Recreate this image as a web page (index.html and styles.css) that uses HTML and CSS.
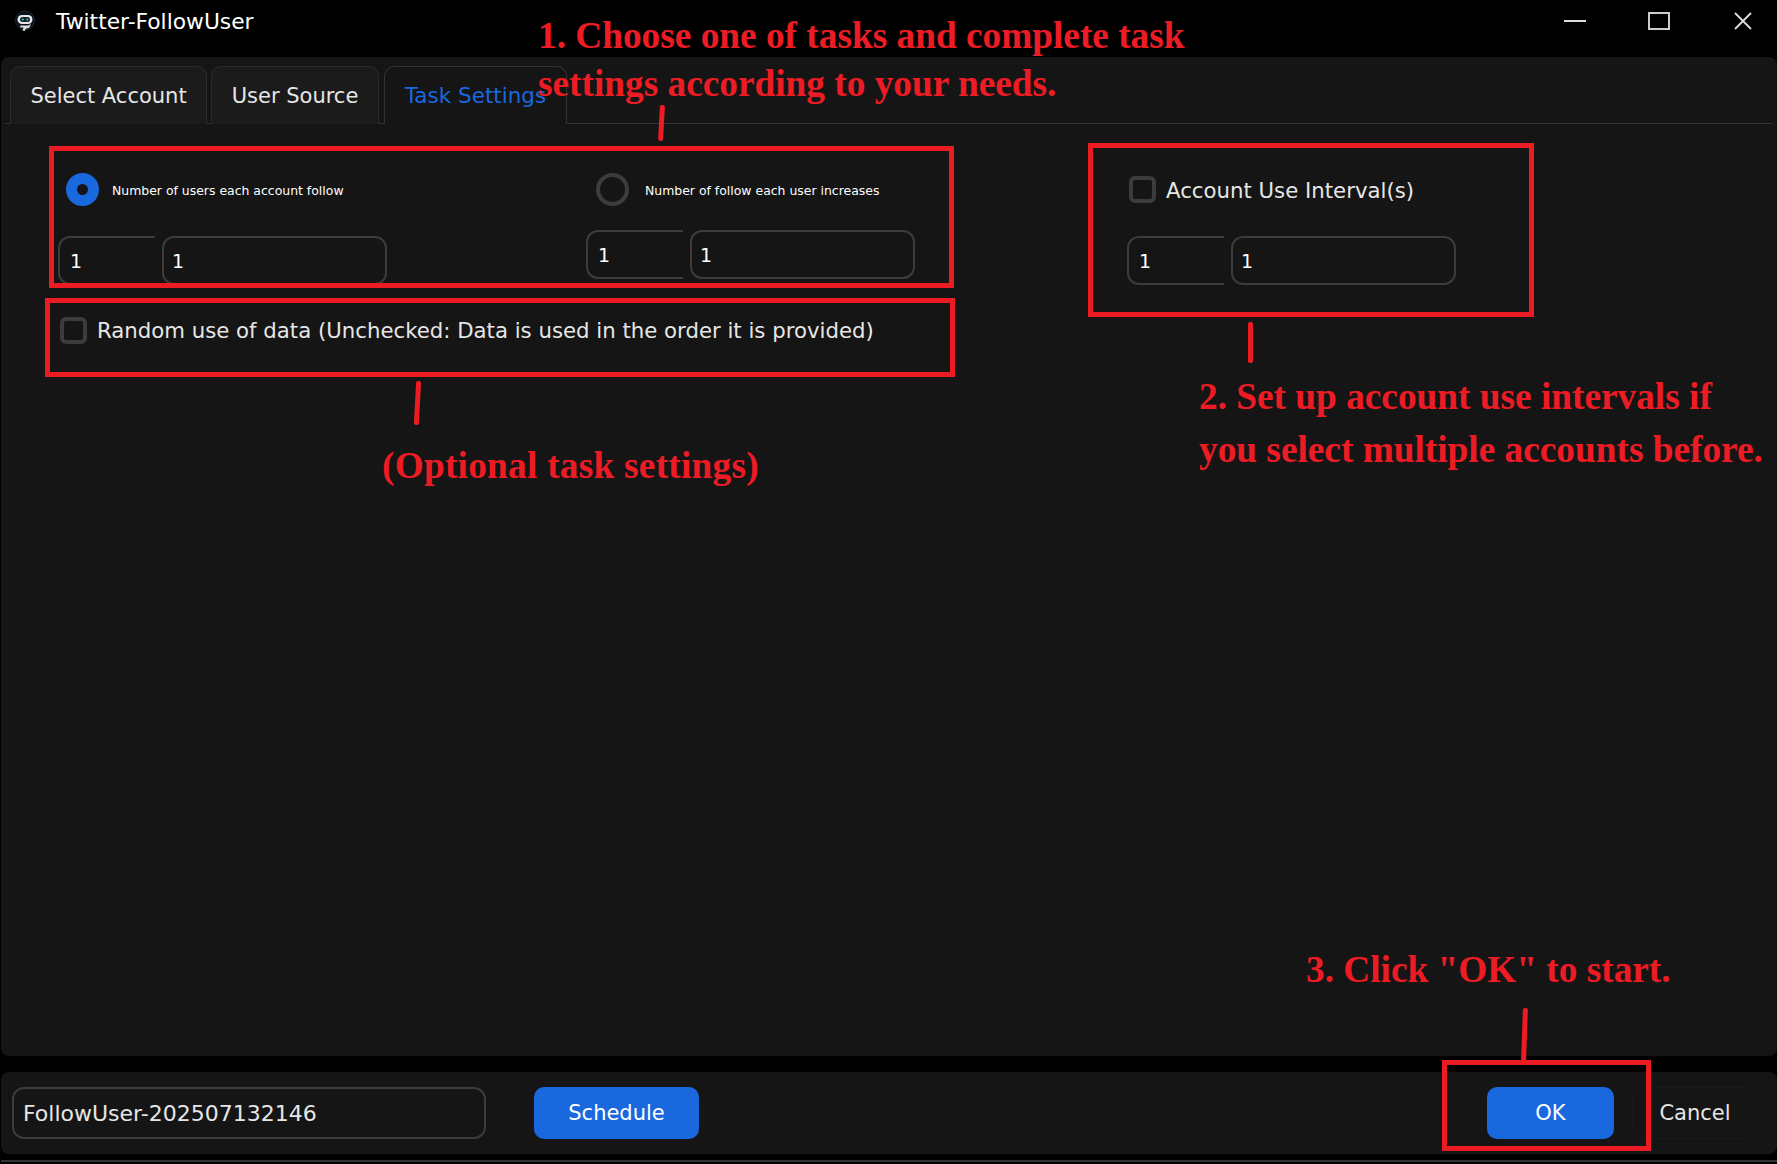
FILE: index.html
```html
<!DOCTYPE html>
<html lang="en">
<head>
    <meta charset="UTF-8">
    <title>Twitter-FollowUser</title>
    <link rel="stylesheet" href="styles.css">
</head>
<body>
    <div class="app">
        <div class="titlebar">
            <svg class="app-icon" viewBox="0 0 20 24" width="20" height="24">
                <circle cx="10" cy="11.500" r="9.500" fill="#0a1118" stroke="#1c2a36"/>
                <rect x="2.500" y="6" width="15" height="9" rx="4.500" fill="#e6e6e6"/>
                <rect x="5" y="8" width="10" height="5" rx="2.500" fill="#17202a"/>
                <circle cx="7.800" cy="10.400" r="1" fill="#2ad4c8"/>
                <circle cx="12.200" cy="10.400" r="1" fill="#2ad4c8"/>
                <path d="M5 16.500h8l3-1.500-2 4-3 .5-1.500 2.500-2-.5 1-3H5.500z" fill="#dcdcdc"/>
            </svg>
            <span class="app-title">Twitter-FollowUser</span>
            <div class="window-buttons">
                <svg class="win-min" width="22" height="18" viewBox="0 0 22 18"><path d="M0 9h22" stroke="#ddd" stroke-width="2"/></svg>
                <svg class="win-max" width="22" height="18" viewBox="0 0 22 18"><rect x="1" y="1" width="20" height="16" fill="none" stroke="#ccc" stroke-width="2"/></svg>
                <svg class="win-close" width="18" height="18" viewBox="0 0 18 18"><path d="M1 1l16 16M17 1L1 17" stroke="#ddd" stroke-width="1.800"/></svg>
            </div>
        </div>

        <div class="main-panel">
            <div class="tabs">
                <div class="tab tab-account">Select Account</div>
                <div class="tab tab-source">User Source</div>
                <div class="tab tab-active">Task Settings</div>
            </div>
            <div class="task-body">
                <div class="task-left">
                    <div class="options">
                        <div class="option option-first">
                            <div class="radio-row">
                                <span class="radio radio-on"></span>
                                <span class="radio-label">Number of users each account follow</span>
                            </div>
                            <div class="spin-pair">
                                <div class="spin-start">1</div>
                                <div class="spin-end">1</div>
                            </div>
                        </div>
                        <div class="option option-second">
                            <div class="radio-row">
                                <span class="radio"></span>
                                <span class="radio-label">Number of follow each user increases</span>
                            </div>
                            <div class="spin-pair">
                                <div class="spin-start">1</div>
                                <div class="spin-end">1</div>
                            </div>
                        </div>
                    </div>
                    <div class="check-row check-random">
                        <span class="checkbox"></span>
                        <span>Random use of data (Unchecked: Data is used in the order it is provided)</span>
                    </div>
                </div>
                <div class="task-right">
                    <div class="check-row">
                        <span class="checkbox"></span>
                        <span class="check-label">Account Use Interval(s)</span>
                    </div>
                    <div class="spin-pair">
                        <div class="spin-start">1</div>
                        <div class="spin-end">1</div>
                    </div>
                </div>
            </div>
        </div>

        <div class="footer-panel">
            <div class="name-input">FollowUser-202507132146</div>
            <button class="btn btn-schedule">Schedule</button>
            <button class="btn btn-ok">OK</button>
            <button class="btn btn-cancel">Cancel</button>
        </div>
        <div class="bottom-edge"></div>

        <!-- Red notes drawn over the window -->
        <div class="note-box box-options"></div>
        <div class="note-box box-random"></div>
        <div class="note-box box-interval"></div>
        <div class="note-box box-ok"></div>
        <div class="note-tick tick-options"></div>
        <div class="note-tick tick-random"></div>
        <div class="note-tick tick-interval"></div>
        <div class="note-tick tick-ok"></div>
        <div class="note note-1a">1. Choose one of tasks and complete task</div>
        <div class="note note-1b">settings according to your needs.</div>
        <div class="note note-2a">2. Set up account use intervals if</div>
        <div class="note note-2b">you select multiple accounts before.</div>
        <div class="note note-opt">(Optional task settings)</div>
        <div class="note note-3">3. Click "OK" to start.</div>
    </div>
</body>
</html>
```

FILE: styles.css
```css
body {
    margin: 0;
    background: #000;
    font-family: "DejaVu Sans", sans-serif;
    color: #e6e6e6;
}
.app {
    position: relative;
    width: 1777px;
    height: 1164px;
    overflow: hidden;
    display: flex;
    flex-direction: column;
}
.titlebar {
    height: 57px;
    display: flex;
    align-items: flex-start;
}
.app-icon {
    margin: 9px 0 0 15px;
}
.app-title {
    margin: 9px 0 0 21px;
    font-size: 21.800px;
    line-height: 26px;
    color: #fff;
}
.window-buttons {
    margin-left: auto;
    display: flex;
    padding: 12px 25px 0 0;
}
.win-max {
    margin-left: 62px;
}
.win-close {
    margin-left: 64px;
}
.main-panel {
    height: 999px;
    margin-left: 1px;
    background: #151515;
    border-radius: 8px;
}
.tabs {
    height: 57px;
    margin: 0 5px 0 4px;
    padding: 9px 0 0 5px;
    display: flex;
    gap: 4px;
    border-bottom: 1px solid #333;
}
.tab {
    box-sizing: border-box;
    height: 58px;
    padding-top: 16px;
    text-align: center;
    font-size: 21px;
    line-height: 26px;
    background: #1b1b1b;
    border: 1px solid #2b2b2b;
    border-bottom: none;
    border-radius: 10px 10px 0 0;
}
.tab-account {
    width: 197px;
}
.tab-source {
    width: 168px;
}
.tab-active {
    width: 183px;
    margin-left: 1px;
    font-size: 21.500px;
    color: #1a68de;
    background: #151515;
    border-color: #333;
}
.task-body {
    display: flex;
    padding-top: 48px;
}
.task-left {
    width: 1126px;
}
.options {
    display: flex;
}
.option {
    padding-top: 1px;
}
.option-first {
    width: 528px;
    margin-left: 57px;
}
.option-first .spin-pair {
    margin-top: 30px;
}
.option-second .spin-pair {
    margin-top: 24px;
}
.radio-row {
    display: flex;
    align-items: center;
    height: 33px;
    margin-left: 8px;
    gap: 13px;
    font-size: 12.450px;
    color: #fff;
}
.radio-label {
    padding-top: 2px;
}
.option-second .radio-row {
    margin-left: 10px;
    gap: 16px;
}
.radio {
    box-sizing: border-box;
    width: 33px;
    height: 33px;
    border: 4px solid #3c3c3c;
    border-radius: 50%;
}
.radio-on {
    border: 11px solid #1a68de;
    background: #151515;
}
.spin-pair {
    display: flex;
    gap: 7px;
    height: 49px;
    color: #fff;
    font-size: 19px;
}
.spin-start,
.spin-end {
    box-sizing: border-box;
    display: flex;
    align-items: center;
    padding-left: 10px;
    border: 2px solid #3c3c3c;
    border-radius: 12px;
}
.spin-start {
    width: 97px;
    border-right: none;
    border-radius: 12px 0 0 12px;
}
.spin-end {
    width: 225px;
    padding-left: 8px;
}
.check-row {
    display: flex;
    align-items: center;
    height: 27px;
    gap: 10px;
    font-size: 21.250px;
}
.check-label {
    padding-top: 2px;
}
.check-random {
    margin: 32px 0 0 59px;
}
.checkbox {
    box-sizing: border-box;
    width: 27px;
    height: 27px;
    border: 4px solid #3c3c3c;
    border-radius: 6px;
}
.task-right {
    padding-top: 4px;
}
.task-right .check-row {
    margin: 0 0 33px 2px;
}
.footer-panel {
    box-sizing: border-box;
    height: 82px;
    margin: 16px 0 0 1px;
    padding: 15px 19px 0 11px;
    display: flex;
    background: #151515;
    border-radius: 8px;
}
.name-input {
    box-sizing: border-box;
    width: 474px;
    height: 52px;
    padding-left: 9px;
    font-size: 22px;
    line-height: 50px;
    border: 2px solid #3c3c3c;
    border-radius: 12px;
}
.btn {
    height: 52px;
    padding: 0;
    font-family: inherit;
    font-size: 21px;
    color: #fff;
    background: #1a68de;
    border: none;
    border-radius: 10px;
}
.btn-schedule {
    width: 165px;
    margin-left: 48px;
}
.btn-ok {
    width: 127px;
    margin-left: auto;
}
.btn-cancel {
    box-sizing: border-box;
    width: 126px;
    margin-left: 18px;
    color: #e6e6e6;
    background: #151515;
    border: 1px solid #1a1a1a;
}
.bottom-edge {
    height: 2px;
    margin: 6px 0 0 1px;
    background: #333;
}

/* red notes */
.note-box {
    position: absolute;
    box-sizing: border-box;
    border: 5px solid #ed1c24;
}
.box-options {
    left: 49px;
    top: 146px;
    width: 905px;
    height: 142px;
}
.box-random {
    left: 45px;
    top: 298px;
    width: 910px;
    height: 79px;
}
.box-interval {
    left: 1088px;
    top: 143px;
    width: 446px;
    height: 174px;
}
.box-ok {
    left: 1442px;
    top: 1060px;
    width: 209px;
    height: 91px;
}
.note-tick {
    position: absolute;
    width: 5px;
    background: #ed1c24;
    border-radius: 2px;
}
.tick-options {
    left: 659px;
    top: 105px;
    height: 36px;
    transform: rotate(3deg);
}
.tick-random {
    left: 415px;
    top: 381px;
    height: 44px;
    transform: rotate(3deg);
}
.tick-interval {
    left: 1248px;
    top: 322px;
    height: 41px;
}
.tick-ok {
    left: 1522px;
    top: 1008px;
    height: 54px;
    transform: rotate(2deg);
}
.note {
    position: absolute;
    font-family: "Liberation Serif", serif;
    font-weight: bold;
    font-size: 37.300px;
    line-height: 40px;
    white-space: nowrap;
    color: #ed1c24;
}
.note-1a {
    left: 538px;
    top: 16px;
}
.note-1b {
    left: 538px;
    top: 64px;
}
.note-2a {
    left: 1199px;
    top: 377px;
}
.note-2b {
    left: 1199px;
    top: 430px;
}
.note-opt {
    left: 382px;
    top: 446px;
    letter-spacing: .250px;
}
.note-3 {
    left: 1306px;
    top: 950px;
}
```
